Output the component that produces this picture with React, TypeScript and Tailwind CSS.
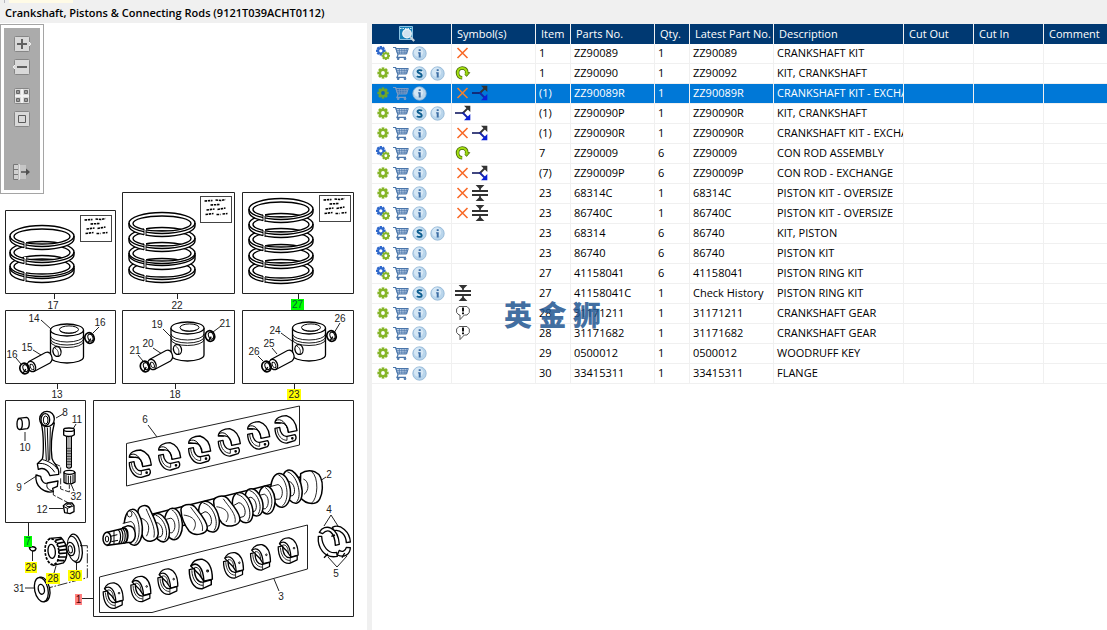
import type { ReactNode } from "react";

type Part = {
  gear: "single" | "double";
  supersede?: boolean;
  symbols?: SymbolName[];
  item: string;
  partNo: string;
  qty: string;
  latest: string;
  description: string;
  selected?: boolean;
};

type SymbolName = "cross" | "rotate" | "branch" | "squeeze" | "note";

const PARTS: Part[] = [
  { gear: "double", symbols: ["cross"], item: "1", partNo: "ZZ90089", qty: "1", latest: "ZZ90089", description: "CRANKSHAFT KIT" },
  { gear: "single", supersede: true, symbols: ["rotate"], item: "1", partNo: "ZZ90090", qty: "1", latest: "ZZ90092", description: "KIT, CRANKSHAFT" },
  { gear: "single", symbols: ["cross", "branch"], item: "(1)", partNo: "ZZ90089R", qty: "1", latest: "ZZ90089R", description: "CRANKSHAFT KIT - EXCHANGE", selected: true },
  { gear: "single", supersede: true, symbols: ["branch"], item: "(1)", partNo: "ZZ90090P", qty: "1", latest: "ZZ90090R", description: "KIT, CRANKSHAFT" },
  { gear: "single", symbols: ["cross", "branch"], item: "(1)", partNo: "ZZ90090R", qty: "1", latest: "ZZ90090R", description: "CRANKSHAFT KIT - EXCHANGE" },
  { gear: "double", symbols: ["rotate"], item: "7", partNo: "ZZ90009", qty: "6", latest: "ZZ90009", description: "CON ROD ASSEMBLY" },
  { gear: "single", symbols: ["cross", "branch"], item: "(7)", partNo: "ZZ90009P", qty: "6", latest: "ZZ90009P", description: "CON ROD - EXCHANGE" },
  { gear: "single", symbols: ["cross", "squeeze"], item: "23", partNo: "68314C", qty: "1", latest: "68314C", description: "PISTON KIT - OVERSIZE" },
  { gear: "double", symbols: ["cross", "squeeze"], item: "23", partNo: "86740C", qty: "1", latest: "86740C", description: "PISTON KIT - OVERSIZE" },
  { gear: "double", supersede: true, item: "23", partNo: "68314", qty: "6", latest: "86740", description: "KIT, PISTON" },
  { gear: "double", item: "23", partNo: "86740", qty: "6", latest: "86740", description: "PISTON KIT" },
  { gear: "double", item: "27", partNo: "41158041", qty: "6", latest: "41158041", description: "PISTON RING KIT" },
  { gear: "single", supersede: true, symbols: ["squeeze"], item: "27", partNo: "41158041C", qty: "1", latest: "Check History", description: "PISTON RING KIT" },
  { gear: "single", symbols: ["note"], item: "28", partNo: "31171211", qty: "1", latest: "31171211", description: "CRANKSHAFT GEAR" },
  { gear: "single", symbols: ["note"], item: "28", partNo: "31171682", qty: "1", latest: "31171682", description: "CRANKSHAFT GEAR" },
  { gear: "single", item: "29", partNo: "0500012", qty: "1", latest: "0500012", description: "WOODRUFF KEY" },
  { gear: "single", item: "30", partNo: "33415311", qty: "1", latest: "33415311", description: "FLANGE" },
];

/* ---------- icons ---------- */

function Cog({ cx, cy, r, color, hole }: { cx: number; cy: number; r: number; color: string; hole: string }) {
  return (
    <g transform={`translate(${cx} ${cy})`}>
      {[0, 45, 90, 135].map((a) => (
        <rect key={a} x={-r} y={-r * 0.24} width={r * 2} height={r * 0.48} fill={color} transform={`rotate(${a})`} />
      ))}
      <circle r={r * 0.76} fill={color} />
      <circle r={r * 0.34} fill={hole} />
    </g>
  );
}

function GearIcon({ kind, selected }: { kind: "single" | "double"; selected?: boolean }) {
  const hole = selected ? "#0b62b8" : "#fff";
  return (
    <svg width="14" height="14" viewBox="0 0 14 14">
      {kind === "double" ? (
        <>
          <Cog cx={4.8} cy={4.8} r={4.8} color="#2f68cc" hole={hole} />
          <Cog cx={9.8} cy={9.8} r={4.2} color="#85b528" hole={hole} />
        </>
      ) : (
        <Cog cx={7} cy={7} r={5.6} color={selected ? "#6da52c" : "#85b528"} hole={hole} />
      )}
    </svg>
  );
}

function CartIcon({ selected }: { selected?: boolean }) {
  const c = selected ? "#7d9cc4" : "#4a76ab";
  return (
    <svg width="16" height="14" viewBox="0 0 16 14" fill="none" stroke={c}>
      <path d="M0 1.5H2.6L5 8.8L4 11.3H13" strokeWidth="1.2" />
      <path d="M3 2.5H15.3L13.6 8H4.8Z" fill={selected ? "#2f6fb5" : "#c3d5ea"} />
      <path d="M3.6 4.4H14.6M4.2 6.2H14M6.4 2.5V8M8.8 2.5V8M11.2 2.5V8M13.4 2.5L12.9 8" strokeWidth="0.7" />
      <circle cx="5.2" cy="12.8" r="0.9" fill={c} />
      <circle cx="12" cy="12.8" r="0.9" fill={c} />
    </svg>
  );
}

function BadgeIcon({ letter }: { letter: "S" | "i" }) {
  return (
    <svg width="15" height="15" viewBox="0 0 15 15">
      <circle cx="7.5" cy="7.5" r="6.7" fill="#b9d5eb" stroke="#8db3d4" strokeWidth="0.8" />
      <circle cx="6.6" cy="6.2" r="4.6" fill="#d5e7f5" />
      {letter === "i" ? (
        <path d="M6.7 3.2h2v1.8h-2zM6.1 6.2h2.6v5.2h-2V7.4h-.6z" fill="#3d6ea5" />
      ) : (
        <path d="M10 4.9C9 3.9 5.5 3.7 5.5 5.6C5.5 7.6 9.7 6.9 9.7 9.2C9.7 11.5 6 11.2 4.9 10.1" fill="none" stroke="#0f5f91" strokeWidth="1.9" />
      )}
    </svg>
  );
}

function SymbolIcon({ name, selected }: { name: SymbolName; selected?: boolean }) {
  if (name === "cross") {
    return (
      <svg width="15" height="16" viewBox="0 0 15 16" role="img" aria-label="Not available">
        <path d="M2.5 3L12.5 13M12.5 3L2.5 13" fill="none" stroke={selected ? "#f08030" : "#f86a28"} strokeWidth="1.6" />
      </svg>
    );
  }
  if (name === "rotate") {
    return (
      <svg width="16" height="16" viewBox="0 0 16 16" role="img" aria-label="Superseded">
        <path d="M7.2 12.8C1.2 12.6 0.8 3.4 7.2 3C10.4 3 11.8 5 11.8 8" fill="none" stroke="#46640c" strokeWidth="3.6" />
        <path d="M8 7.6H14.8L11.6 11.4Z" fill="#8fce12" stroke="#46640c" strokeWidth="0.8" />
        <path d="M6.8 12.7C1.4 12.4 1 3.4 7.2 3C10.4 3 11.8 5 11.8 8.6" fill="none" stroke="#a4e010" strokeWidth="2" />
        <circle cx="7.4" cy="8" r="2.5" fill="#fff" />
      </svg>
    );
  }
  if (name === "branch") {
    return (
      <svg width="16" height="16" viewBox="0 0 16 16" role="img" aria-label="Exchange">
        <path d="M0 8H8" stroke="#141b62" strokeWidth="1.6" />
        <path d="M7.5 8.5L12.5 3.5" stroke="#333" strokeWidth="1.8" />
        <path d="M7.5 7.5L12.5 12.5" stroke="#1422a8" strokeWidth="1.8" />
        <path d="M9 0.8H15.3V7Z" fill="#333" />
        <path d="M9 15.2H15.3V9Z" fill="#0a20d8" />
      </svg>
    );
  }
  if (name === "squeeze") {
    return (
      <svg width="16" height="16" viewBox="0 0 16 16" role="img" aria-label="Oversize">
        <path d="M3.6 0H12.4L8 4.6ZM3.6 16H12.4L8 11.4Z" fill="#333" />
        <path d="M8 0V6M8 16V10" stroke="#333" strokeWidth="1.6" />
        <path d="M0 5H16V7H0ZM0 9H16V11H0Z" fill="#333" />
      </svg>
    );
  }
  return (
    <svg width="16" height="16" viewBox="0 0 16 16" role="img" aria-label="Note">
      <path d="M4 1.5H12L14.3 4V7.5L12 10H9.3L5 14.6V10H4L1.6 7.5V4Z" fill="#fff" stroke="#555" strokeWidth="1" />
      <path d="M7 2.4H9V6.6H7ZM7 7.6H9V9.2H7Z" fill="#111" />
    </svg>
  );
}

function FindIcon() {
  return (
    <svg width="16" height="16" viewBox="0 0 16 16">
      <path d="M0.5 0.5H13.5V13.5H0.5Z" fill="#1681b8" stroke="#8cc4e4" />
      <path d="M1 2.5H13" stroke="#d6ecf8" strokeDasharray="1.5 1" />
      <circle cx="8" cy="7.6" r="4.3" fill="#cfe2ef" stroke="#eef4f8" strokeWidth="1.2" />
      <path d="M11.3 11L15.2 15" stroke="#c8d2da" strokeWidth="2.2" />
    </svg>
  );
}

/* ---------- exploded drawing ---------- */

function Ring({ cx, cy, rx = 32, thick = 3 }: { cx: number; cy: number; rx?: number; thick?: number }) {
  const ry = 10.5;
  const l = cx - rx;
  const r = cx + rx;
  return (
    <g stroke="#000" strokeWidth="1.4" fill="#fff">
      <path
        fillRule="evenodd"
        d={`M${l} ${cy}A${rx} ${ry} 0 0 1 ${r} ${cy}V${cy + thick}A${rx} ${ry} 0 0 1 ${l} ${cy + thick}Z M${l + 4} ${cy + 0.5}A${rx - 4} ${ry - 3} 0 0 0 ${r - 4} ${cy + 0.5}A${rx - 4} ${ry - 3} 0 0 0 ${l + 4} ${cy + 0.5}Z`}
      />
      <path d={`M${l} ${cy}A${rx} ${ry} 0 0 0 ${r} ${cy}`} fill="none" />
      {thick > 3 && <path d={`M${l} ${cy + 2}A${rx} ${ry} 0 0 0 ${r} ${cy + 2}`} fill="none" />}
      <path d={`M${cx - 17} ${cy + 5}v${thick + 5}`} stroke="#fff" strokeWidth="2" />
      <path d={`M${cx - 18} ${cy + 6}v${thick + 3}M${cx - 16} ${cy + 7}v${thick + 3}`} strokeWidth="0.9" />
    </g>
  );
}

function NoteCard({ x, y }: { x: number; y: number }) {
  return (
    <g transform={`translate(${x} ${y})`} stroke="#000" fill="none">
      <rect width="31" height="26" stroke="#444" />
      <path
        d="M4 4.5l8-0.5M15 3.5l5 0.5 5-1M10 8.5l9-0.5M6 13.5l8-1M17 13l8-1.500M5 18l8-1M16 18h4M22 17.5l5-0.5"
        strokeWidth="1.6"
        strokeDasharray="2.5 0.8"
      />
    </g>
  );
}

function Clip({ x, y }: { x: number; y: number }) {
  return (
    <g transform={`translate(${x} ${y}) rotate(-20)`} fill="none" stroke="#000">
      <ellipse rx="4.6" ry="5.4" strokeWidth="1.7" />
      <ellipse cx="1" rx="2.4" ry="3.6" strokeWidth="1" />
      <path d="M-3 4l4-3" />
    </g>
  );
}

function Piston({ x, y }: { x: number; y: number }) {
  return (
    <g transform={`translate(${x} ${y})`} fill="#fff" stroke="#000" strokeWidth="1.3">
      <path d="M-16.5 0V27A16.5 6 0 0 0 16.5 27V0" />
      <ellipse rx="16.5" ry="6" />
      <ellipse cx="2" cy="-0.5" rx="9.5" ry="3.6" strokeWidth="1" />
      <path d="M-7 1C-4 4 5 4 9 2" strokeWidth="0.8" fill="none" />
      <path d="M-16.5 6A16.5 6 0 0 0 16.5 6M-16.5 9A16.5 6 0 0 0 16.5 9M-16.5 11.5A16.5 6 0 0 0 16.5 11.5" fill="none" strokeWidth="0.9" />
      <ellipse cx="-10" cy="21.5" rx="4" ry="5" transform="rotate(-15 -10 21.5)" />
      <path d="M-12 18C-9 20-8 23-9 26" fill="none" strokeWidth="0.8" />
      <path d="M-38 31.5L-21.5 22.5A5 6 0 0 1-17 33L-33 41.5Z" strokeWidth="1.2" />
      <ellipse cx="-35.5" cy="36.5" rx="3.8" ry="5.4" transform="rotate(-25 -35.5 36.5)" />
      <ellipse cx="-35" cy="37" rx="1.6" ry="3" transform="rotate(-25 -35 37)" strokeWidth="0.9" />
      <Clip x={22.5} y={8} />
      <Clip x={-42.5} y={38.5} />
    </g>
  );
}

function BearingOpen({ x, y }: { x: number; y: number }) {
  return (
    <g transform={`translate(${x} ${y})`} fill="#fff" stroke="#000" strokeWidth="4" strokeLinejoin="round">
      <path d="M-32-20C-32-35-15-42 2-42C25-35 32-17 34 3L8 8C8-7 0-22-16-20Z" />
      <path d="M-30-27C-14-36 2-22 8 8M-16-20L-30-22" fill="none" strokeWidth="3" />
      <path d="M-32-4L-18-7C-17 8-8 22 4 20L28 15C32 21 31 29 27 33L4 40C-16 42-32 20-32-4Z" />
      <path d="M-26-4C-24 18-12 32 4 32M4 20V32" fill="none" strokeWidth="2.5" />
      <circle cx="20" cy="26" r="2" />
    </g>
  );
}

function BearingClosed({ x, y, s = 1 }: { x: number; y: number; s?: number }) {
  return (
    <g transform={`translate(${x} ${y}) scale(${s})`} fill="#fff" stroke="#000" strokeWidth="4" strokeLinejoin="round">
      <path d="M-28-22C-22-36-8-41 4-40C24-34 31-14 31 14L8 20L-4 2Z" />
      <path d="M-28-22C-10-36 6-18 8 20" fill="none" />
      <path d="M-18-18C-6-20 0-8 0 8" fill="none" strokeWidth="2.5" />
      <path d="M-32-12L-18-15C-18 10-8 24 6 22L28 16V29L4 40C-20 42-32 18-32-12Z" />
      <path d="M-25-10C-24 14-12 31 5 31M6 22V38" fill="none" strokeWidth="2.5" />
      <circle cx="18" cy="-8" r="2.5" strokeWidth="3" />
    </g>
  );
}

type Web = { kind: "disc" | "lobe"; cx: number; cy: number; rx: number; ry: number; tilt: number };

// from the flywheel end forward, so nearer webs cover the ones behind
const WEBS: Web[] = [
  { kind: "disc", cx: 607, cy: 275, rx: 27, ry: 51, tilt: -16 },
  { kind: "disc", cx: 572, cy: 286, rx: 29, ry: 51, tilt: -6 },
  { kind: "disc", cx: 530, cy: 315, rx: 25, ry: 42, tilt: -4 },
  { kind: "disc", cx: 492, cy: 322, rx: 25, ry: 42, tilt: -18 },
  { kind: "disc", cx: 458, cy: 338, rx: 28, ry: 47, tilt: -20 },
  { kind: "lobe", cx: 408, cy: 349, rx: 41, ry: 46, tilt: 0 },
  { kind: "disc", cx: 357, cy: 365, rx: 28, ry: 48, tilt: -20 },
  { kind: "lobe", cx: 310, cy: 374, rx: 41, ry: 46, tilt: 0 },
  { kind: "disc", cx: 250, cy: 387, rx: 27, ry: 47, tilt: -4 },
  { kind: "disc", cx: 211, cy: 398, rx: 25, ry: 44, tilt: -18 },
  { kind: "lobe", cx: 172, cy: 386, rx: 34, ry: 54, tilt: 4 },
  { kind: "disc", cx: 130, cy: 397, rx: 27, ry: 54, tilt: -4 },
];

function CrankWeb({ kind, cx, cy, rx, ry, tilt }: Web) {
  const lobe = "M-0.9-0.6C-0.95-0.98-0.2-1.12 0.1-0.85C0.45-0.45 1.05 0.1 1.02 0.55C0.96 0.96 0.1 1.12-0.3 0.76C-0.6 0.4-0.88-0.1-0.9-0.6Z";
  return (
    <g transform={`translate(${cx} ${cy}) rotate(${tilt})`}>
      {kind === "disc" ? (
        <>
          <ellipse rx={rx} ry={ry} />
          <path d={`M-2 ${-ry + 4}C${rx - 4} ${-ry + 20} ${rx - 4} ${ry - 18} 0 ${ry - 4}`} fill="none" strokeWidth="2.5" />
          <path d={`M-6-18L${-rx - 6}-12V22L-6 26C8 18 6-12-6-18Z`} stroke="none" />
          <path d={`M${-rx - 4}-14L-6-18C8-12 8 18-6 26L${-rx - 4} 24`} fill="none" strokeWidth="2.5" />
        </>
      ) : (
        <>
          <path d={lobe} transform={`scale(${rx} ${ry})`} vectorEffect="non-scaling-stroke" strokeWidth="1.5" />
          <path d={`M${-rx * 0.2} ${-ry * 0.82}C${rx * 0.2} ${-ry * 0.3} ${rx * 0.8} ${ry * 0.2} ${rx * 0.66} ${ry * 0.74}`} fill="none" strokeWidth="2.5" />
          <path d={`M${-rx * 0.7} ${-ry * 0.3}C${rx * 0.2} ${-ry * 0.2} ${rx * 0.3} ${ry * 0.3} 0 ${ry * 0.7}`} fill="none" strokeWidth="2.5" />
        </>
      )}
    </g>
  );
}

function Crankshaft() {
  return (
    <g fill="#fff" stroke="#000" strokeWidth="4.5">
      {/* journals behind the webs */}
      <path d="M120 374L640 244V300L120 432Z" />
      {/* flywheel end */}
      <path d="M632 236C646 226 664 227 674 230C692 238 698 258 697 280C696 306 686 323 672 325C654 327 640 320 630 306Z" />
      <path d="M664 229C688 246 684 312 664 325M640 252C658 258 658 288 642 298" fill="none" strokeWidth="2.5" />
      {WEBS.map((web) => <CrankWeb key={web.cx} {...web} />)}
      <path d="M98 398L114 392C140 392 142 432 124 442L98 444Z" />
      <ellipse cx="119" cy="357" rx="7" ry="9" strokeWidth="2.5" />
      <path d="M52 412L104 399C118 404 116 438 104 444L52 451Z" />
      <path d="M84 404C94 412 94 436 86 446M91 402C101 410 101 434 93 445M98 400C108 410 108 434 100 444M104 399C114 410 114 434 106 444" fill="none" strokeWidth="3.5" />
      <ellipse cx="51" cy="431" rx="12" ry="19" />
      <ellipse cx="51" cy="432" rx="5" ry="9" strokeWidth="3" />
      <path d="M62 424L82 419M64 440L84 436M72 408V447" fill="none" strokeWidth="3" />
    </g>
  );
}

function ConRod() {
  return (
    <g fill="#fff" stroke="#000" strokeWidth="4" strokeLinejoin="round">
      {/* small end bush */}
      <path d="M55 70L80 67C90 70 90 96 82 101L59 104Z" />
      <ellipse cx="59" cy="87" rx="8" ry="16" />
      {/* rod */}
      <path d="M124 86C132 120 131 178 127 192L112 206L115 223C130 217 142 222 150 242L176 238C180 214 160 208 156 190C152 158 155 116 163 84Z" />
      <path d="M134 96L139 196M142 98L145 198M151 96L149 196M112 206C132 202 152 212 164 232M128 194C144 198 164 208 172 222" fill="none" strokeWidth="3" />
      <ellipse cx="141" cy="72" rx="22" ry="23" />
      <ellipse cx="136" cy="74" rx="13" ry="18" />
      <ellipse cx="137" cy="75" rx="7" ry="12" strokeWidth="3" />
      {/* cap */}
      <path d="M108 240L122 244C124 258 132 268 142 264L174 258L172 274L158 280L160 290C134 296 104 276 108 240Z" />
      <path d="M142 264C138 276 142 284 158 288" fill="none" strokeWidth="3" />
      {/* bolt */}
      <path d="M200 120V216C204 220 210 220 214 216V120Z" />
      <path d="M207 124V216M201 160H213M201 168H213M201 176H213M201 184H213M201 192H213M201 200H213M201 208H213" strokeWidth="2" />
      <path d="M191 104V120C200 126 214 126 223 119V104Z" />
      <ellipse cx="207" cy="104" rx="16" ry="5" />
      <path d="M192 232V262C202 268 216 268 225 261V232Z" />
      <ellipse cx="208" cy="232" rx="16" ry="6" />
      <path d="M198 240V264M205 242V265M212 242V265M219 240V264" strokeWidth="3" />
      {/* nut */}
      <path d="M190 332L200 324H216L222 332V350L210 356L194 353Z" />
      <path d="M190 334L202 340L222 332M202 340V354" fill="none" strokeWidth="3" />
      <ellipse cx="207" cy="331" rx="8" ry="4" strokeWidth="3" />
      <path d="M164 206L182 214V238M182 250V282L208 291V270M160 290V300L206 324" fill="none" strokeWidth="2.5" strokeDasharray="18 5" />
    </g>
  );
}

function TimingGear() {
  return (
    <g fill="#fff" stroke="#000" strokeWidth="4">
      {/* flange */}
      <ellipse cx="226" cy="460" rx="20" ry="43" transform="rotate(-10 226 460)" />
      <ellipse cx="220" cy="461" rx="17" ry="38" transform="rotate(-10 220 461)" strokeWidth="3" />
      <ellipse cx="212" cy="462" rx="12" ry="20" transform="rotate(-10 212 462)" />
      <ellipse cx="211" cy="463" rx="6" ry="11" transform="rotate(-10 211 463)" strokeWidth="3" />
      {/* crankshaft gear */}
      <path d="M150 430L182 427C204 446 206 488 190 504L160 511Z" />
      <path d="M166 436L186 431M170 446L194 441M174 456L198 452M176 466L200 463M176 476L200 474M174 486L198 486M170 496L192 497" strokeWidth="5" />
      <ellipse cx="156" cy="470" rx="20" ry="39" transform="rotate(-6 156 470)" strokeWidth="6" strokeDasharray="8 4" />
      <ellipse cx="156" cy="470" rx="18" ry="36" transform="rotate(-6 156 470)" stroke="none" />
      <ellipse cx="155" cy="469" rx="11" ry="21" transform="rotate(-6 155 469)" />
      {/* key */}
      <path d="M88 458C94 454 104 454 108 460C106 470 92 472 88 458Z" />
      {/* washer */}
      <ellipse cx="129" cy="583" rx="20" ry="37" transform="rotate(-12 129 583)" />
      <ellipse cx="124" cy="584" rx="20" ry="37" transform="rotate(-12 124 584)" />
      <ellipse cx="124" cy="583" rx="9" ry="15" transform="rotate(-12 124 583)" />
      <path d="M240 452H262V548L148 578" fill="none" strokeWidth="2.5" strokeDasharray="30 5 5 5" />
    </g>
  );
}

function ThrustWashers() {
  return (
    <g fill="#fff" stroke="#000" strokeWidth="4" strokeLinejoin="round">
      <path d="M727 397C752 384 780 412 781 441L769 443C768 420 752 402 732 407Z" />
      <path d="M688 412C704 384 744 394 748 448L736 451C734 410 714 398 698 416Z" />
      <path d="M685 424C682 456 702 492 742 484L740 472C716 478 696 454 695 424Z" />
      <path d="M742 480C766 490 780 476 781 458L769 457C766 470 756 472 748 466Z" />
      <path d="M724 424L735 420M702 488L714 476M756 488L764 474" fill="none" />
    </g>
  );
}

// label text, centre x, centre y
const LABELS: [string, number, number][] = [
  ["17", 53, 305], ["22", 177, 305],
  ["14", 34, 318], ["16", 100, 322], ["15", 27, 347], ["16", 12, 354], ["13", 57, 394],
  ["19", 157, 324], ["21", 225, 323], ["20", 148, 343], ["21", 135, 350], ["18", 175, 394],
  ["24", 275, 330], ["26", 340, 318], ["25", 269, 343], ["26", 254, 351],
  ["8", 65, 412], ["11", 77, 419], ["10", 25, 447], ["9", 19, 487], ["32", 76, 496], ["12", 42, 509], ["31", 19, 588],
  ["6", 145, 419], ["2", 329, 474], ["4", 329, 509], ["5", 336, 573], ["3", 281, 596],
];

// label text, rect x, y, width, fill, text colour
const HOTSPOTS: [string, number, number, number, string, string][] = [
  ["27", 291, 299, 13, "#00ff00", "#063"],
  ["23", 287, 389, 14, "#ffff00", "#222"],
  ["7", 24, 536, 8, "#00ff00", "#063"],
  ["29", 25, 562, 12, "#ffff00", "#222"],
  ["28", 46, 573, 14, "#ffff00", "#222"],
  ["30", 68, 570, 14, "#ffff00", "#222"],
  ["1", 75, 594, 7, "#ff8080", "#400"],
];

function Diagram() {
  return (
    <svg width="367" height="607" viewBox="0 23 367 607" className="block" role="img" aria-label="Exploded view of crankshaft, pistons and connecting rods">
      <g fill="none" stroke="#222">
        <path d="M5.5 210.5H115.5V293.5H5.5ZM122.5 192.5H234.5V293.5H122.5ZM242.5 192.5H353.5V293.5H242.5Z" />
        <path d="M5.5 310.5H115.5V383.5H5.5ZM122.5 310.5H234.5V383.5H122.5ZM242.5 310.5H353.5V383.5H242.5Z" />
        <path d="M5.5 400.5H85.5V522.5H5.5ZM93.5 400.5H353.5V616.5H93.5Z" />
        <path d="M54.5 293V299M177.5 293V299M298.5 293V299M57.5 383V389M175.5 383V389M294.5 383V389M28.5 522V536M82 598.5H93" />
        <path d="M41 320L51 329M99 327L93 333M33 350L41 355M16 358L21 364" />
        <path d="M163 329L171 337M221 326L213 332M153 348L162 354M138 355L143 361" />
        <path d="M281 333L292 341M340 323L334 333M272 348L277 354M258 356L263 361" />
        <path d="M63 414L56 418M76 424L73 429M25 441V432M24 484L38 475M74 491L71 484M49 508.5H63M32.5 561V551M54 573L56 566M76.5 570V562M25 588L34 588" />
        <path d="M148 425L157 437M320 481L326 477M274 579L279 591M331 515L324 526M331 515L338 526M328 557L337 567L347 556" />
        <path d="M126.5 443.5L299.5 406V445L126.5 486ZM99.5 577L307.5 525V569L152 612.5H99.5Z" />
      </g>

      <Ring cx={42} cy={266} thick={6} />
      <Ring cx={42} cy={252} />
      <Ring cx={42} cy={236} />
      <Ring cx={162} cy={269} rx={33} />
      <Ring cx={162} cy={253} rx={33} thick={6} />
      <Ring cx={162} cy={238} rx={33} />
      <Ring cx={162} cy={223} rx={33} />
      <Ring cx={281} cy={270} rx={32} />
      <Ring cx={281} cy={255} rx={32} />
      <Ring cx={281} cy={239} rx={32} />
      <Ring cx={281} cy={224} rx={32} />
      <Ring cx={281} cy={209} rx={32} />
      <NoteCard x={80.5} y={215.5} />
      <NoteCard x={200.5} y={196.5} />
      <NoteCard x={319.5} y={195.5} />

      <Piston x={67} y={330} />
      <Piston x={187.5} y={328} />
      <Piston x={309} y={328} />

      <g transform="translate(0 395) scale(0.33333)">
        <ConRod />
        <TimingGear />
      </g>
      <g transform="translate(90 395) scale(0.33333)">
        {[[150, 207], [238, 185], [328, 165], [417, 143], [505, 122], [587, 104]].map(([x, y]) => (
          <BearingOpen key={x} x={x} y={y} />
        ))}
        {[[70, 602], [153, 582], [234, 560], [431, 511], [512, 487], [595, 467]].map(([x, y]) => (
          <BearingClosed key={x} x={x} y={y} s={0.95} />
        ))}
        <BearingClosed x={333} y={537} s={1.1} />
        <Crankshaft />
        <ThrustWashers />
      </g>

      <g className="font-['Liberation_Sans',sans-serif] text-[10px]" textAnchor="middle" fill="#222">
        {LABELS.map(([label, x, y]) => (
          <text key={`${label}-${x}`} x={x} y={y + 4}>{label}</text>
        ))}
        {HOTSPOTS.map(([label, x, y, w, fill, color]) => (
          <g key={label}>
            <rect x={x} y={y} width={w} height="11" fill={fill} />
            <text x={x + w / 2} y={y + 9} fill={color}>{label}</text>
          </g>
        ))}
      </g>
    </svg>
  );
}

/* ---------- zoom toolbar ---------- */

function ToolButton({ label, children }: { label: string; children: ReactNode }) {
  return (
    <button type="button" aria-label={label} className="flex h-4 w-5 items-center justify-center">
      <svg width="20" height="16" viewBox="0 0 20 16">{children}</svg>
    </button>
  );
}

function ToolFace() {
  return <rect x="2.5" y="0.5" width="15" height="15" rx="1" fill="#d9d9d9" stroke="#868686" />;
}

function ZoomToolbar() {
  return (
    <div className="absolute left-0 top-px h-[170px] w-11 border border-[#a5a5a5] bg-white p-[3px]">
      <div className="flex h-full flex-col items-center bg-[#ababab] pt-2">
        <ToolButton label="Zoom in">
          <ToolFace />
          <path d="M17 6L19 8L17 10" fill="#d9d9d9" stroke="#eee" />
          <path d="M5 8H15M10 3V13" stroke="#606060" strokeWidth="2" />
        </ToolButton>
        <div className="h-[7px]" />
        <ToolButton label="Zoom out">
          <ToolFace />
          <path d="M3 6L1 8L3 10" fill="#d9d9d9" stroke="#eee" />
          <path d="M5 8H15" stroke="#606060" strokeWidth="2" />
        </ToolButton>
        <div className="h-[13px]" />
        <ToolButton label="Fit to window">
          <ToolFace />
          <path d="M10 1V15M3 8H17" stroke="#f2f2f2" strokeWidth="2" />
          <path d="M4.5 2.5H7.5V5.5H4.5ZM12.5 2.5H15.5V5.5H12.5ZM4.5 10.5H7.5V13.5H4.5ZM12.5 10.5H15.5V13.5H12.5Z" fill="#999" stroke="#666" />
        </ToolButton>
        <div className="h-[7px]" />
        <ToolButton label="Actual size">
          <ToolFace />
          <path d="M6.5 4.5H13.5V11.5H6.5Z" fill="none" stroke="#5c5c5c" />
        </ToolButton>
        <div className="h-[37px]" />
        <ToolButton label="Move panel">
          <path d="M1.5 0.5H6.5V15.5H1.5ZM1.5 5.5H6.5M1.5 10.5H6.5" fill="#d0d0d0" stroke="#777" />
          <path d="M7 1H14V15H7Z" fill="#c6c6c6" />
          <path d="M7 0V16" stroke="#fff" />
          <path d="M9 8H17" stroke="#505050" strokeWidth="1.5" />
          <path d="M14 4.5L18 8L14 11.5Z" fill="#505050" />
        </ToolButton>
      </div>
    </div>
  );
}

/* ---------- parts list ---------- */

function PartRow({ part }: { part: Part }) {
  const cell = "overflow-hidden border-b border-r border-[#f0f0f0] p-0 pb-px pl-[3px]";
  return (
    <tr className={part.selected ? "h-5 bg-[#0078d7] text-white" : "h-5 bg-white text-black"}>
      <td className="border-b border-r border-[#f0f0f0] p-0 pb-px pl-1">
        <div className="flex items-center gap-[3px]">
          <GearIcon kind={part.gear} selected={part.selected} />
          <button type="button" aria-label={`Add ${part.partNo} to cart`}>
            <CartIcon selected={part.selected} />
          </button>
          {part.supersede && (
            <button type="button" aria-label={`Supersession of ${part.partNo}`}>
              <BadgeIcon letter="S" />
            </button>
          )}
          <button type="button" aria-label={`Information on ${part.partNo}`}>
            <BadgeIcon letter="i" />
          </button>
        </div>
      </td>
      <td className={cell}>
        <div className="flex items-center gap-[2px]">
          {part.symbols?.map((name) => <SymbolIcon key={name} name={name} selected={part.selected} />)}
        </div>
      </td>
      <td className={cell}>{part.item}</td>
      <td className={cell}>{part.partNo}</td>
      <td className={cell}>{part.qty}</td>
      <td className={cell}>{part.latest}</td>
      <td className={cell}>{part.description}</td>
      <td className={cell} />
      <td className={cell} />
      <td className="border-b border-[#f0f0f0] p-0" />
    </tr>
  );
}

function PartsTable() {
  const head = "overflow-hidden border-r border-[#f0f0f0] p-0 pl-[5px] font-normal";
  return (
    <table className="w-full table-fixed border-separate border-spacing-0 whitespace-nowrap text-left text-[11px] leading-4">
      <colgroup>
        <col className="w-20" />
        <col className="w-[84px]" />
        <col className="w-[35px]" />
        <col className="w-[84px]" />
        <col className="w-[35px]" />
        <col className="w-[84px]" />
        <col className="w-[130px]" />
        <col className="w-[70px]" />
        <col className="w-[70px]" />
        <col />
      </colgroup>
      <thead>
        <tr className="h-5 bg-[#003972] text-white">
          <th className="border-r border-[#f0f0f0] p-0 pl-[27px]">
            <button type="button" aria-label="Find in list" className="block">
              <FindIcon />
            </button>
          </th>
          <th className={head}>Symbol(s)</th>
          <th className={head}>Item</th>
          <th className={head}>Parts No.</th>
          <th className={head}>Qty.</th>
          <th className={head}>Latest Part No.</th>
          <th className={head}>Description</th>
          <th className={head}>Cut Out</th>
          <th className={head}>Cut In</th>
          <th className="overflow-hidden p-0 pl-[5px] font-normal">Comment</th>
        </tr>
      </thead>
      <tbody>
        {PARTS.map((part) => (
          <PartRow key={part.partNo} part={part} />
        ))}
      </tbody>
    </table>
  );
}

export default function App() {
  return (
    <div className="flex min-h-screen flex-col bg-white font-['Open_Sans','Noto_Sans',sans-serif]">
      <header className="h-[23px] bg-[#f0f0f0]">
        <div className="ml-1 h-[3px] w-[69px] border-l border-[#b8b8c0] pl-1">
          <div className="h-full bg-[#fffbe6]" />
        </div>
        <h1 className="pl-[5px] text-[11px] font-semibold leading-5 text-black">
          Crankshaft, Pistons &amp; Connecting Rods (9121T039ACHT0112)
        </h1>
      </header>
      <main className="flex flex-1">
        <section className="relative w-[367px] shrink-0 bg-white">
          <Diagram />
          <ZoomToolbar />
        </section>
        <div className="w-[5px] shrink-0 bg-[#f0f0f0]" />
        <section className="relative min-w-0 flex-1 border-t border-[#f0f0f0]">
          <PartsTable />
          <div className="pointer-events-none absolute left-[132px] top-[276px] whitespace-nowrap font-['Noto_Sans_CJK_SC',sans-serif] text-[28px] font-black leading-7 text-[#1f5590]/85">
            英 金 狮
          </div>
        </section>
      </main>
    </div>
  );
}
